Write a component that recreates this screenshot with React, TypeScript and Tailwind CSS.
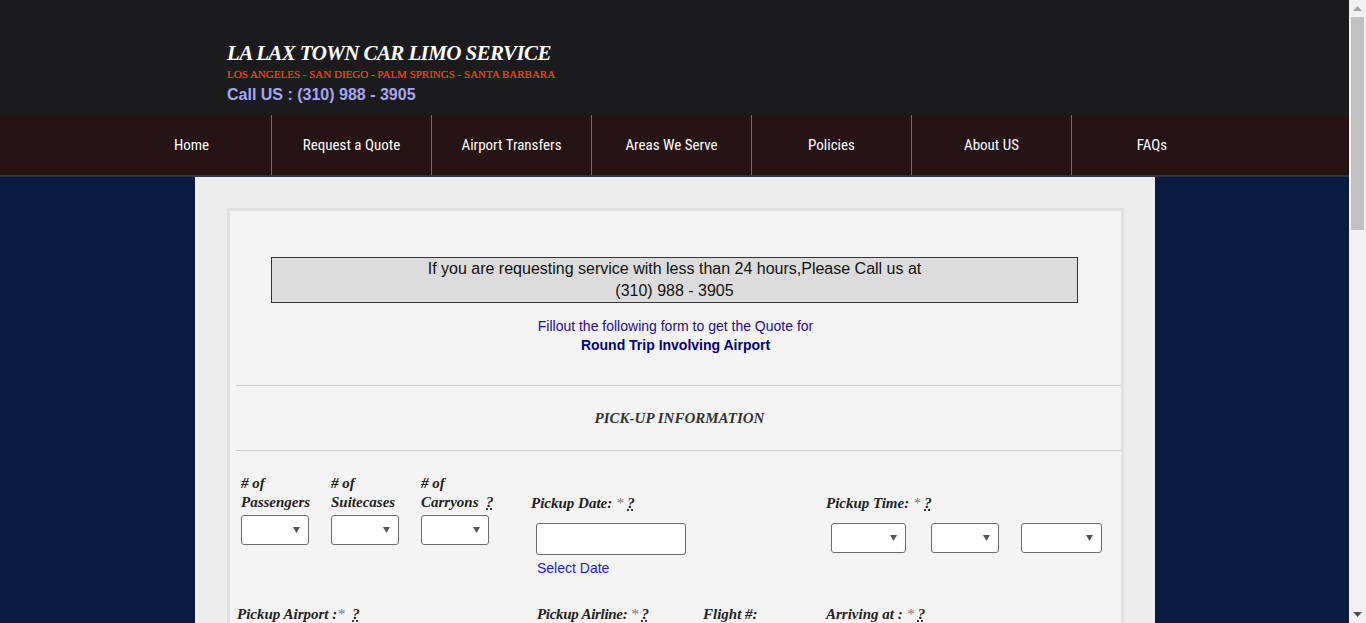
import type React from "react";

const serif = "font-['Liberation_Serif','Times_New_Roman',serif]";
const sans = "font-['Liberation_Sans',Arial,sans-serif]";

const navItems = [
	"Home",
	"Request a Quote",
	"Airport Transfers",
	"Areas We Serve",
	"Policies",
	"About US",
	"FAQs",
];

function Caret() {
	return (
		<svg width="7" height="6" viewBox="0 0 7 6" className="fill-[#555]">
			<path d="M0 0h7L3.5 6z" />
		</svg>
	);
}

function SelectBox({ width, height = 30 }: { width: number; height?: number }) {
	return (
		<div
			className="flex items-center justify-end pr-[8px] bg-white border border-[#6b6b6b] rounded-[3px]"
			style={{ width, height }}
		>
			<Caret />
		</div>
	);
}

function Help() {
	return <span className="underline decoration-dotted decoration-black underline-offset-2">?</span>;
}

function Label({ children, className = "" }: { children: React.ReactNode; className?: string }) {
	return (
		<div className={`${serif} italic font-bold text-[15px] leading-[19px] text-[#222] ${className}`}>
			{children}
		</div>
	);
}

function Star() {
	return <span className="text-[#777] font-normal">*</span>;
}

export default function App() {
	return (
		<div className="flex h-[623px] w-[1366px] overflow-hidden">
			<div className="flex flex-col w-[1349px]">
				{/* Header */}
				<header className="h-[115px] bg-[#1b1b1d] pl-[227px] pt-[41px]">
					<h1
						className={`${serif} italic font-bold text-white text-[21px] leading-[24px] tracking-[-0.6px]`}
					>
						LA LAX TOWN CAR LIMO SERVICE
					</h1>
					<p className={`${serif} text-[#f0391c] text-[11px] leading-[13px] mt-[3px] [text-shadow:0_0_0.4px_#f0391c]`}>
						LOS ANGELES - SAN DIEGO - PALM SPRINGS - SANTA BARBARA
					</p>
					<p className={`${sans} font-bold text-[#a6a6f4] text-[16px] leading-[20px] mt-[4px]`}>
						Call US : (310) 988 - 3905
					</p>
				</header>

				{/* Nav */}
				<nav className="h-[62px] bg-[#261313] border-b-2 border-[#2c3644] flex pl-[112px]">
					{navItems.map((item, i) => (
						<div
							key={item}
							className={`w-[160px] flex items-center justify-center text-white text-[15px] font-['Liberation_Sans_Narrow','Roboto_Condensed',Roboto,sans-serif] ${
								i < navItems.length - 1 ? "border-r border-[#6e6e6e]" : ""
							}`}
						>
							{item}
						</div>
					))}
				</nav>

				{/* Main */}
				<main className="flex-1 bg-[#0b1b40] overflow-hidden">
					<div className="w-[960px] ml-[195px] h-full bg-[#ededed] pt-[31px] pl-[32px]">
						<div className="w-[897px] h-[600px] border-[3px] border-[#e0e0e0] bg-[#f4f4f4]">
							<div
								className={`${sans} mt-[46px] ml-[41px] mr-[43px] h-[46px] border border-[#333] bg-[#dcdcdc] text-center text-[16px] leading-[22px] text-[#111]`}
							>
								If you are requesting service with less than 24 hours,Please Call us at
								<br />
								(310) 988 - 3905
							</div>

							<div className={`${sans} text-center text-[14px] leading-[19px] mt-[14px]`}>
								<p className="text-[#2a0a99]">Fillout the following form to get the Quote for</p>
								<p className="font-bold text-[#000080]">Round Trip Involving Airport</p>
							</div>

							<div className="ml-[6px] mt-[30px] border-t border-[#cfcfcf]" />
							<div
								className={`${serif} italic font-bold text-[15px] text-[#333] h-[64px] flex items-center justify-center pl-[8px]`}
							>
								PICK-UP INFORMATION
							</div>
							<div className="ml-[6px] border-t border-[#cfcfcf]" />

							{/* Row 1 */}
							<div className="flex pl-[11px] pt-[23px]">
								<div className="w-[90px]">
									<Label>
										# of
										<br />
										Passengers
									</Label>
									<div className="mt-[3px]">
										<SelectBox width={68} />
									</div>
								</div>
								<div className="w-[90px]">
									<Label>
										# of
										<br />
										Suitecases
									</Label>
									<div className="mt-[3px]">
										<SelectBox width={68} />
									</div>
								</div>
								<div className="w-[110px]">
									<Label>
										# of
										<br />
										Carryons&nbsp; <Help />
									</Label>
									<div className="mt-[3px]">
										<SelectBox width={68} />
									</div>
								</div>
								<div className="w-[295px] pt-[20px]">
									<Label>
										Pickup Date: <Star /> <Help />
									</Label>
									<div className="ml-[5px] mt-[10px] w-[150px] h-[32px] bg-white border border-[#6b6b6b] rounded-[3px]" />
									<p className={`${sans} ml-[6px] mt-[4px] text-[14px] leading-[18px] text-[#1a1aef]`}>
										Select Date
									</p>
								</div>
								<div className="pt-[20px]">
									<Label>
										Pickup Time: <Star /> <Help />
									</Label>
									<div className="flex ml-[5px] mt-[10px]">
										<SelectBox width={75} height={30} />
										<div className="ml-[25px]">
											<SelectBox width={68} height={30} />
										</div>
										<div className="ml-[22px]">
											<SelectBox width={81} height={30} />
										</div>
									</div>
								</div>
							</div>

							{/* Row 2 */}
							<div className="flex pl-[7px] mt-[28px]">
								<Label className="w-[300px]">
									Pickup Airport :<Star />&nbsp; <Help />
								</Label>
								<Label className="w-[166px] text-[12px] tracking-[-0.3px]">
									Pickup Airline: <Star /> <Help />
								</Label>
								<Label className="w-[123px] text-[12px]">Flight #:</Label>
								<Label>
									Arriving at : <Star /> <Help />
								</Label>
							</div>
						</div>
					</div>
				</main>
			</div>

			{/* Scrollbar */}
			<div className="w-[17px] bg-[#f1f1f1] flex flex-col items-center">
				<div className="h-[17px] flex items-center justify-center">
					<svg width="9" height="5" viewBox="0 0 9 5" className="fill-[#a3a3a3]">
						<path d="M0 5L4.5 0L9 5z" />
					</svg>
				</div>
				<div className="w-[13px] h-[213px] bg-[#c1c1c1]" />
				<div className="flex-1" />
				<div className="h-[17px] flex items-center justify-center">
					<svg width="9" height="5" viewBox="0 0 9 5" className="fill-[#505050]">
						<path d="M0 0L9 0L4.5 5z" />
					</svg>
				</div>
			</div>
		</div>
	);
}
